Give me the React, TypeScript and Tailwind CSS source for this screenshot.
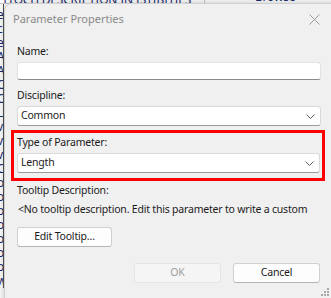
import React from "react";

const Chevron = () => (
  <svg width="9" height="5" viewBox="0 0 9 5" fill="none" className="shrink-0">
    <path d="M0.5 0.5 L4.5 4.5 L8.5 0.5" stroke="#5f5f5f" strokeWidth="1" />
  </svg>
);

const Select = ({ value }: { value: string }) => (
  <div className="flex h-[20px] items-center justify-between rounded-[3px] border border-[#d9d9d9] border-b-[#9a9a9a] bg-white pl-[3px] pr-[5px]">
    <span>{value}</span>
    <Chevron />
  </div>
);

const Button = ({ label, disabled = false }: { label: string; disabled?: boolean }) => (
  <button
    disabled={disabled}
    className={`flex h-[20px] w-full items-center justify-center rounded-[3px] border ${
      disabled
        ? "border-[#e5e5e5] bg-[#f5f5f5] text-[#a0a0a0]"
        : "border-[#d0d0d0] border-b-[#b5b5b5] bg-[#fdfdfd] text-[#1b1b1b]"
    }`}
  >
    {label}
  </button>
);

const bgLeft = ["e", "c", "e", "A", "A", "O", "O", "L", "v", "v", "v", "C", "o", "o", "o", "o", "o", "o", "o", "w"];

export default function App() {
  return (
    <div
      className="relative h-[298px] w-[331px] overflow-hidden bg-white text-[10.5px] tracking-[-0.2px] text-[#1b1b1b]"
      style={{ fontFamily: '"Noto Sans", "Open Sans", sans-serif' }}
    >
      {/* background window behind the dialog */}
      <div className="flex h-[4px] items-end overflow-hidden border-b border-[#c8c8c8] pl-[4px] text-[12px] leading-none">
        <span className="w-[190px] translate-y-[3px] text-[#1b2a70]">(TOCH DESCRIPTION IN ISTIBITIES</span>
        <span className="ml-[10px] border-l border-[#c8c8c8] pl-[50px] text-[#1b2a70]">Browse</span>
      </div>
      <div className="flex w-[4px] flex-col overflow-hidden border-r border-[#555] pt-[4px] text-[12px] leading-[14px] text-[#1b2a70]">
        {bgLeft.map((c, i) => (
          <span key={i} className="-ml-[3px]">{c}</span>
        ))}
      </div>

      {/* dialog */}
      <div className="absolute left-[4px] top-[3px] h-[310px] w-[340px] rounded-tl-[8px] border border-[#cfcfcf] bg-[#f0f0f0] shadow-[0_0_8px_rgba(0,0,0,0.25)]">
        <div className="flex h-[30px] items-center justify-between pl-[8px] pr-[23px]">
          <span className="text-[11px] tracking-normal text-[#8a8a8a]">Parameter Properties</span>
          <svg width="11" height="11" viewBox="0 0 11 11">
            <path d="M0.5 0.5 L10.5 10.5 M10.5 0.5 L0.5 10.5" stroke="#9a9a9a" strokeWidth="1" />
          </svg>
        </div>

        <div className="flex w-[316px] flex-col pl-[12px] pt-[9px]">
          <div className="leading-[16px]">Name:</div>
          <div className="mt-[3px] h-[18px] rounded-[3px] border border-[#e2e2e2] border-b-[#8a8a8a] bg-white" />

          <div className="mt-[7px] leading-[16px]">Discipline:</div>
          <div className="mt-[3px]">
            <Select value="Common" />
          </div>

          <div className="-ml-[6px] mt-[4px] w-[314px] border-[3px] border-[#ff0000] pb-[5px] pl-[3px] pr-[2px] pt-[1px]">
            <div className="leading-[16px]">Type of Parameter:</div>
            <div className="mt-[3px]">
              <Select value="Length" />
            </div>
          </div>

          <div className="mt-[1px] leading-[16px]">Tooltip Description:</div>
          <div className="mt-[3px] whitespace-nowrap pl-[1px] leading-[16px]">
            &lt;No tooltip description. Edit this parameter to write a custom
          </div>

          <div className="mt-[10px] w-[95px]">
            <Button label="Edit Tooltip…" />
          </div>

          <div className="mt-[16px] flex justify-end gap-[12px] pr-[1px]">
            <div className="w-[87px]">
              <Button label="OK" disabled />
            </div>
            <div className="w-[87px]">
              <Button label="Cancel" />
            </div>
          </div>
        </div>
      </div>

      {/* resize grip */}
      <svg className="absolute bottom-[1px] right-[1px]" width="9" height="9" viewBox="0 0 9 9">
        <g fill="#a8a8a8">
          <rect x="6" y="0" width="2" height="2" />
          <rect x="3" y="3" width="2" height="2" />
          <rect x="6" y="3" width="2" height="2" />
          <rect x="0" y="6" width="2" height="2" />
          <rect x="3" y="6" width="2" height="2" />
          <rect x="6" y="6" width="2" height="2" />
        </g>
      </svg>
    </div>
  );
}
